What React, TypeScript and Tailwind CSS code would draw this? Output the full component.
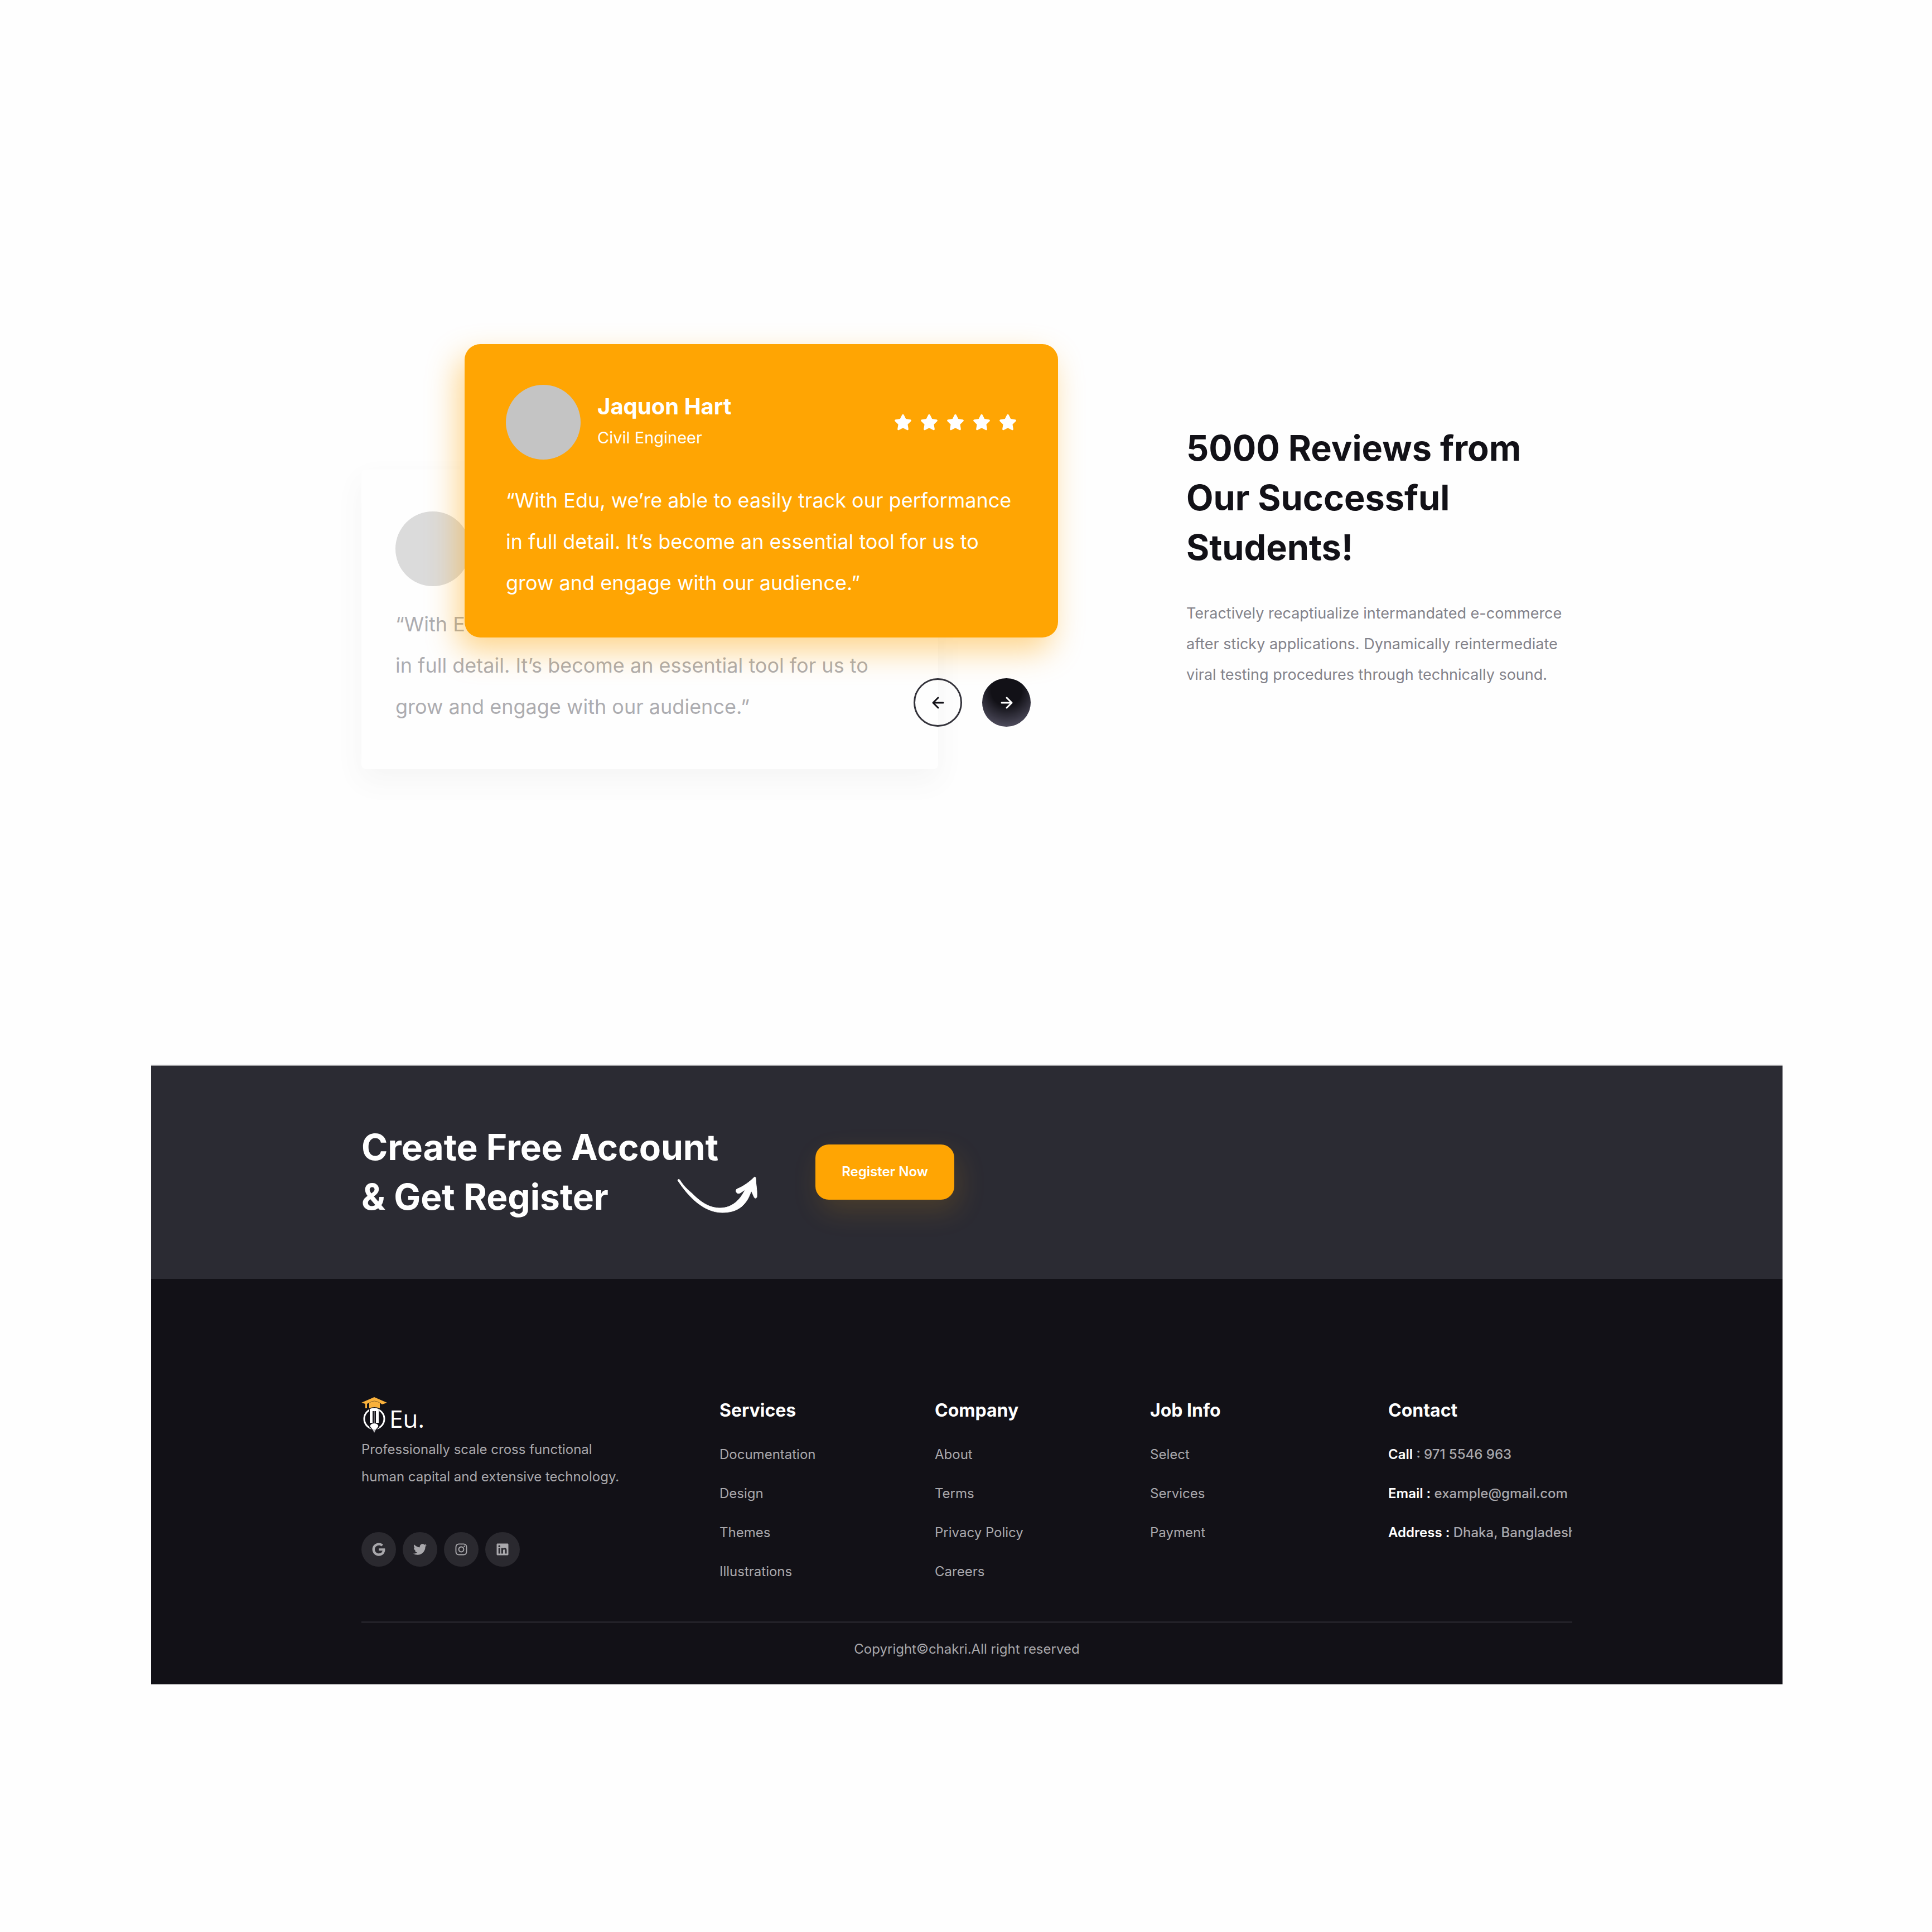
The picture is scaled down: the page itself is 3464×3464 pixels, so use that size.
import React from "react";
import { FaGoogle, FaInstagram, FaLinkedin, FaStar, FaTwitter } from "react-icons/fa";

const QUOTE =
  "“With Edu, we’re able to easily track our performance in full detail. It’s become an essential tool for us to grow and engage with our audience.”";

const LINK_COLUMNS = [
  { title: "Services", links: ["Documentation", "Design", "Themes", "Illustrations"] },
  { title: "Company", links: ["About", "Terms", "Privacy Policy", "Careers"] },
  { title: "Job Info", links: ["Select", "Services", "Payment"] },
];

const SOCIALS = [
  { label: "Google", Icon: FaGoogle },
  { label: "Twitter", Icon: FaTwitter },
  { label: "Instagram", Icon: FaInstagram },
  { label: "LinkedIn", Icon: FaLinkedin },
];

function ArrowIcon({ flip = false }: { flip?: boolean }) {
  return (
    <svg viewBox="0 0 24 24" className="size-6" fill="none" stroke="currentColor" strokeWidth="3" strokeLinecap="round" strokeLinejoin="round" aria-hidden="true">
      {flip ? <path d="M21 12H3M12 3L3 12l9 9" /> : <path d="M3 12h18M12 3l9 9-9 9" />}
    </svg>
  );
}

function Swoosh() {
  return (
    <svg viewBox="0 0 143 64" className="-ml-[74px] mb-4 h-16 w-[143px] shrink-0 overflow-visible self-end" fill="#ffffff" stroke="#ffffff" strokeWidth="1" strokeLinejoin="round" aria-hidden="true">
      <path d="M0 6C1 4 3 4 4 6C11 17 18 23 27 31C43 47 58 56 76 56C97 56 112 42 121 23L112 29C107 32 102 26 106 22C118 17 128 10 137 1C139 -1 140 1 140 3C140 14 143 24 142 36C141 39 138 39 137 36L132 25C124 50 109 64 80 64C46 64 18 34 0 6Z" />
    </svg>
  );
}

function Logo() {
  return (
    <a href="#" className="flex items-end gap-1 text-white">
      <svg viewBox="0 0 46 64" className="h-16 w-[46px] shrink-0" aria-hidden="true">
        <circle cx="23" cy="39" r="18" fill="none" stroke="#fff" strokeWidth="3" />
        <path d="M14 22H32V54L23 62L14 54Z" fill="#121117" />
        <path d="M15 22Q23 18 31 22V25H15Z" fill="#fff" />
        <path d="M15 23H20V46H15ZM26 23H31V46H26Z" fill="#fff" />
        <path d="M22 25H24V46H22Z" fill="#6b6a70" />
        <path d="M23 47C28 47 31 50 30 53L26 58H20L16 53C15 50 18 47 23 47Z" fill="#fff" />
        <path d="M20 58H26L23 64Z" fill="#b9b9bd" />
        <path d="M23 0L46 10L37 13L33 10V20Q23 16 14 20V10L10 12V20H7V12L0 10Z" fill="#f9b13c" />
        <path d="M13 11Q23 3 34 11" fill="none" stroke="#8a642a" strokeWidth="1" />
      </svg>
      <span className="font-['Open_Sans',sans-serif] text-[44px] leading-[52px] font-medium">Eu.</span>
    </a>
  );
}

function Testimonials() {
  return (
    <section className="mx-auto flex w-full max-w-[2171px] items-start gap-[230px] pt-[617px] pb-[530px]">
      <div className="grid w-[1249px] shrink-0">
        <article className="col-start-1 row-start-1 mt-[225px] mr-[215px] rounded-lg bg-white px-[61px] pt-[75px] pb-[75px] opacity-60 shadow-[0_20px_50px_rgba(0,0,0,0.06)]">
          <div className="size-[134px] rounded-full bg-[#c4c4c4]" />
          <p className="mt-[31px] text-[36px] leading-[74px] text-[#77767d]">{QUOTE}</p>
        </article>
        <article className="z-10 col-start-1 row-start-1 ml-[185px] self-start rounded-[28px] bg-[#ffa503] px-[74px] pt-[73px] pb-[61px] text-white shadow-[-12px_24px_56px_rgba(255,165,3,0.45)]">
          <header className="flex items-center">
            <div className="size-[134px] shrink-0 rounded-full bg-[#c4c4c4]" />
            <div className="ml-[30px] leading-[56px]">
              <h3 className="text-[40px] font-bold">Jaquon Hart</h3>
              <p className="text-[29px]">Civil Engineer</p>
            </div>
            <div className="ml-auto flex gap-[15px]" role="img" aria-label="5 out of 5 stars">
              {[1, 2, 3, 4, 5].map((n) => (
                <FaStar key={n} className="h-8 w-8" />
              ))}
            </div>
          </header>
          <p className="mt-9 text-[36px] leading-[74px]">{QUOTE}</p>
        </article>
        <div className="z-20 col-start-1 row-start-1 mr-[49px] mb-[76px] flex gap-9 self-end justify-self-end">
          <button type="button" aria-label="Previous review" className="flex size-[87px] items-center justify-center rounded-full border-3 border-[#34333b] text-[#121117]">
            <ArrowIcon flip />
          </button>
          <button type="button" aria-label="Next review" className="flex size-[87px] items-center justify-center rounded-full bg-[radial-gradient(circle_at_50%_25%,#121117_35%,#4f4d5e_85%)] text-white">
            <ArrowIcon />
          </button>
        </div>
      </div>
      <div className="flex-1 pt-[142px]">
        <h2 className="text-[63px] leading-[89px] font-bold text-[#121117]">5000 Reviews from Our Successful Students!</h2>
        <p className="mt-[46px] text-[27px] leading-[55px] text-[#83828a]">
          Teractively recaptiualize intermandated e-commerce after sticky applications. Dynamically reintermediate viral testing procedures through technically sound.
        </p>
      </div>
    </section>
  );
}

function CallToAction() {
  return (
    <section className="border-t-2 border-[#a3a3a6] bg-[#2b2b33] pt-[101px] pb-[103px]">
      <div className="mx-auto flex w-full max-w-[2171px] items-center">
        <h2 className="min-w-[641px] text-[64px] leading-[89px] font-bold text-white">
          Create Free Account
          <br />
          &amp; Get Register
        </h2>
        <Swoosh />
        <button type="button" className="ml-[104px] h-[99px] w-[249px] rounded-3xl bg-[#ffa503] text-[24px] font-semibold text-white shadow-[8px_20px_50px_rgba(255,165,3,0.15)]">
          Register Now
        </button>
      </div>
    </section>
  );
}

function Footer() {
  return (
    <footer className="bg-[#121117] pt-[212px] pb-[39px] text-[24px] text-[#a9a8ac]">
      <div className="mx-auto w-full max-w-[2171px]">
        <div className="grid grid-cols-[642fr_386fr_386fr_427fr_330fr]">
          <div>
            <Logo />
            <p className="mt-[5px] max-w-[480px] leading-[49px]">Professionally scale cross functional human capital and extensive technology.</p>
            <ul className="mt-[75px] flex gap-3">
              {SOCIALS.map(({ label, Icon }) => (
                <li key={label}>
                  <a href="#" aria-label={label} className="flex size-[62px] items-center justify-center rounded-full bg-[#2a292f]">
                    <Icon className="size-6" />
                  </a>
                </li>
              ))}
            </ul>
          </div>
          {LINK_COLUMNS.map(({ title, links }) => (
            <nav key={title} aria-label={title} className="pt-1">
              <h3 className="text-[32px] leading-10 font-bold text-white">{title}</h3>
              <ul className="mt-6 leading-[70px]">
                {links.map((link) => (
                  <li key={link}>
                    <a href="#">{link}</a>
                  </li>
                ))}
              </ul>
            </nav>
          ))}
          <div className="overflow-hidden pt-1 whitespace-nowrap">
            <h3 className="text-[32px] leading-10 font-bold text-white">Contact</h3>
            <ul className="mt-6 leading-[70px] font-medium">
              <li>
                <span className="font-semibold text-white">Call</span> : 971 5546 963
              </li>
              <li>
                <span className="font-semibold text-white">Email :</span> example@gmail.com
              </li>
              <li>
                <span className="font-semibold text-white">Address :</span> Dhaka, Bangladesh
              </li>
            </ul>
          </div>
        </div>
        <p className="mt-[54px] border-t-3 border-[#232229] pt-[23px] text-center leading-[48px]">Copyright©chakri.All right reserved</p>
      </div>
    </footer>
  );
}

export default function App() {
  return (
    <div className="min-h-screen bg-[#fefefe] pl-[3px] font-['Inter',sans-serif]">
      <main className="mx-auto w-full max-w-[2925px]">
        <Testimonials />
        <CallToAction />
        <Footer />
      </main>
    </div>
  );
}
